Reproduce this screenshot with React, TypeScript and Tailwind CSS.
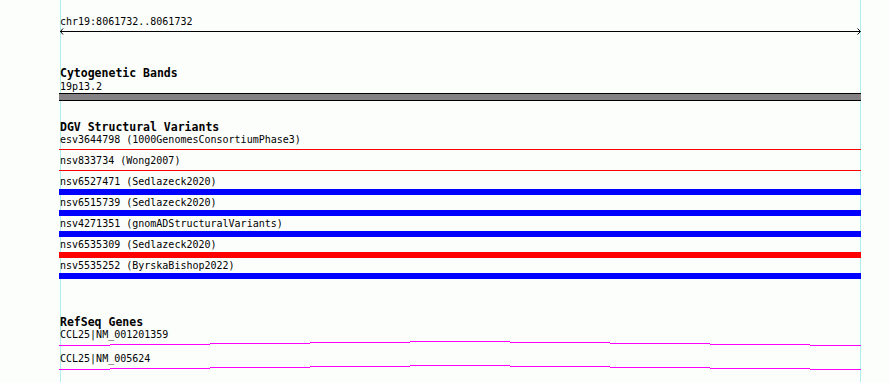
import React from 'react';

type Variant = { label: string; kind: 'line' | 'bar'; color: string };

const variants: Variant[] = [
  { label: 'esv3644798 (1000GenomesConsortiumPhase3)', kind: 'line', color: 'bg-[#ff0000]' },
  { label: 'nsv833734 (Wong2007)', kind: 'line', color: 'bg-[#ff0000]' },
  { label: 'nsv6527471 (Sedlazeck2020)', kind: 'bar', color: 'bg-[#0000ff]' },
  { label: 'nsv6515739 (Sedlazeck2020)', kind: 'bar', color: 'bg-[#0000ff]' },
  { label: 'nsv4271351 (gnomADStructuralVariants)', kind: 'bar', color: 'bg-[#0000ff]' },
  { label: 'nsv6535309 (Sedlazeck2020)', kind: 'bar', color: 'bg-[#ff0000]' },
  { label: 'nsv5535252 (ByrskaBishop2022)', kind: 'bar', color: 'bg-[#0000ff]' },
];

const genes = ['CCL25|NM_001201359', 'CCL25|NM_005624'];

// x is relative to the track's left edge (page x 59); each step sits one pixel higher/lower
const geneSteps: [number, number, number][] = [
  [0, 51, 4],
  [51, 151, 3],
  [151, 251, 2],
  [251, 351, 1],
  [351, 451, 0],
  [451, 551, 1],
  [551, 651, 2],
  [651, 751, 3],
  [751, 802, 4],
];

const TrackTitle: React.FC<{ children: React.ReactNode; className?: string }> = ({ children, className }) => (
  <div className={`pl-px text-[11.5px] font-bold whitespace-pre ${className ?? ''}`}>{children}</div>
);

const Label: React.FC<{ children: React.ReactNode }> = ({ children }) => (
  <div className="h-[12px] pl-px text-[10px] leading-[12px] whitespace-pre">{children}</div>
);

const GeneLine: React.FC = () => (
  <svg width={802} height={12} className="block" shapeRendering="crispEdges">
    {geneSteps.map(([x1, x2, y]) => (
      <line key={x1} x1={x1} x2={x2} y1={y + 0.5} y2={y + 0.5} stroke="#ff00ff" strokeWidth={1} />
    ))}
  </svg>
);

export default function App() {
  return (
    <div className="relative h-[382px] w-[890px] overflow-hidden bg-[#fcfefc] font-['DejaVu_Sans_Mono',monospace] text-black">
      {/* viewport guides */}
      <div className="absolute inset-y-0 left-[60px] w-px bg-[#afeeee]" />
      <div className="absolute inset-y-0 left-[860px] w-px bg-[#afeeee]" />

      <div className="relative ml-[59px] w-[802px]">
        <div className="mt-[16px]">
          <Label>chr19:8061732..8061732</Label>
        </div>
        <svg width={802} height={8} className="block" shapeRendering="crispEdges">
          <line x1={1} x2={801} y1={3.5} y2={3.5} stroke="#000" strokeWidth={1} />
          <polyline points="4,0.5 1.5,3.5 4,6.5" fill="none" stroke="#000" strokeWidth={1} shapeRendering="auto" />
          <polyline points="798.5,0.5 801.5,3.5 798.5,6.5" fill="none" stroke="#000" strokeWidth={1} shapeRendering="auto" />
        </svg>

        <TrackTitle className="mt-[31px] h-[13px] leading-[13px]">Cytogenetic Bands</TrackTitle>
        <div className="pt-px">
          <Label>19p13.2</Label>
        </div>
        <div className="h-[8px] border-y border-black bg-[#858285]" />

        <TrackTitle className="mt-[20px] h-[13px] leading-[13px]">DGV Structural Variants</TrackTitle>
        {variants.map((v) =>
          v.kind === 'line' ? (
            <div key={v.label} className="h-[21px]">
              <Label>{v.label}</Label>
              <div className={`mt-[3px] h-px ${v.color}`} />
            </div>
          ) : (
            <div key={v.label} className="h-[21px]">
              <Label>{v.label}</Label>
              <div className={`mt-px h-[6px] ${v.color}`} />
            </div>
          )
        )}

        <TrackTitle className="mt-[35px] h-[13px] leading-[13px]">RefSeq Genes</TrackTitle>
        {genes.map((g) => (
          <div key={g}>
            <Label>{g}</Label>
            <GeneLine />
          </div>
        ))}
      </div>
    </div>
  );
}
